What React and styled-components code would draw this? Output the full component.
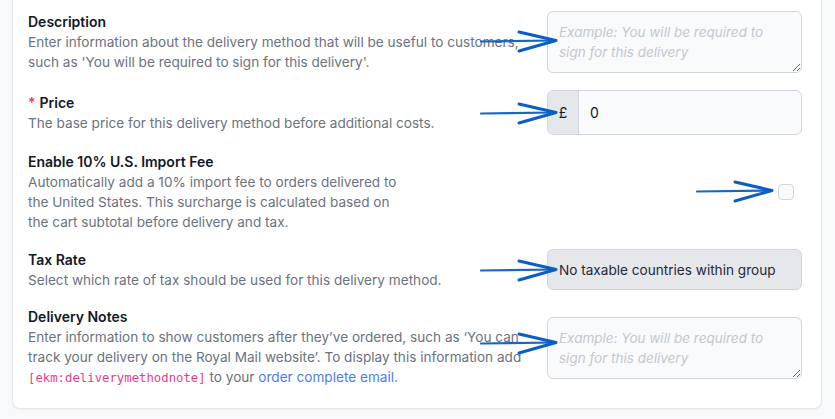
import React from 'react';
import styled, { createGlobalStyle } from 'styled-components';

const GlobalStyle = createGlobalStyle`
  body {
    margin: 0;
    background: #f8f9fb;
    font-family: Inter, "Noto Sans", sans-serif;
  }
`;

const Page = styled.div`
  padding: 0 13px 10px 12px;
`;

const Card = styled.div`
  background: #fff;
  border: 1px solid #e5e7eb;
  border-top: 0;
  border-radius: 0 0 8px 8px;
  box-shadow: 0 1px 2px rgba(0, 0, 0, 0.05);
  padding: 11px 19px 20px 15px;
  display: flex;
  flex-direction: column;
  gap: 17px;
`;

const Row = styled.div`
  display: grid;
  grid-template-columns: 1fr 255px;
  column-gap: 24px;
  align-items: center;
`;

const Info = styled.div`
  font-size: 13.6px;
  line-height: 20px;
  max-width: ${({ narrow }) => (narrow ? '380px' : 'none')};
`;

const Title = styled.div`
  font-size: 14px;
  font-weight: 600;
  color: #111827;
`;

const Required = styled.span`
  color: #ef4444;
  margin-right: 4px;
`;

const Help = styled.div`
  color: #6b7280;
`;

const Code = styled.code`
  font-family: "DejaVu Sans Mono", "Liberation Mono", monospace;
  font-size: 12.3px;
  color: #e83e8c;
`;

const Link = styled.a`
  color: #4a7cf6;
  text-decoration: none;
`;

const Control = styled.div`
  position: relative;
  display: flex;
  justify-content: ${({ end }) => (end ? 'flex-end' : 'stretch')};
  padding-right: ${({ end }) => (end ? '8px' : '0')};
`;

const TextArea = styled.textarea`
  width: 100%;
  height: 62px;
  box-sizing: border-box;
  border: 1px solid #d1d5db;
  border-radius: 6px;
  background: #f9fafb;
  padding: 10px 11px;
  font-family: Inter, sans-serif;
  font-size: 13.5px;
  line-height: 20px;
  color: #111827;
  outline: none;
  resize: vertical;
  &::placeholder {
    color: #c4c7ce;
    font-style: italic;
  }
`;

const InputGroup = styled.div`
  display: flex;
  width: 100%;
  height: 45px;
  box-sizing: border-box;
  border: 1px solid #d1d5db;
  border-radius: 6px;
  overflow: hidden;
  background: #f9fafb;
`;

const Prefix = styled.span`
  flex: 0 0 30px;
  display: flex;
  align-items: center;
  justify-content: center;
  background: #e5e7eb;
  border-right: 1px solid #d1d5db;
  font-size: 14px;
  color: #111827;
`;

const Input = styled.input`
  flex: 1;
  min-width: 0;
  border: 0;
  background: transparent;
  padding: 0 11px;
  font-family: Inter, sans-serif;
  font-size: 14px;
  color: #111827;
  outline: none;
`;

const Checkbox = styled.span`
  width: 16px;
  height: 16px;
  box-sizing: border-box;
  border: 1px solid #d1d5db;
  border-radius: 4px;
  background: #f9fafb;
`;

const Select = styled.div`
  width: 100%;
  height: 41px;
  box-sizing: border-box;
  display: flex;
  align-items: center;
  padding: 0 11px;
  border: 1px solid #d1d5db;
  border-radius: 6px;
  background: #e5e7eb;
  font-size: 13.6px;
  color: #1f2937;
`;

const ArrowSvg = styled.svg`
  position: absolute;
  left: ${({ left }) => left}px;
  top: ${({ top }) => top}px;
  pointer-events: none;
`;

function Arrow({ left = -67, top = 20 }) {
  return (
    <ArrowSvg left={left} top={top} width="78" height="24" viewBox="0 0 78 24">
      <path d="M1 11.5 L 76 10.5" stroke="#0b5fc4" strokeWidth="2.2" strokeLinecap="round" fill="none" opacity="0.95" />
      <path d="M39 2 L 76 10.5 L 39 21" stroke="#0b5fc4" strokeWidth="3" strokeLinecap="round" strokeLinejoin="round" fill="none" />
    </ArrowSvg>
  );
}

export default function App() {
  return (
    <Page>
      <GlobalStyle />
      <Card>
        <Row>
          <Info>
            <Title>Description</Title>
            <Help>
              Enter information about the delivery method that will be useful to customers,
              such as 'You will be required to sign for this delivery'.
            </Help>
          </Info>
          <Control>
            <Arrow top={19} />
            <TextArea placeholder="Example: You will be required to sign for this delivery" />
          </Control>
        </Row>

        <Row>
          <Info>
            <Title>
              <Required>*</Required>Price
            </Title>
            <Help>The base price for this delivery method before additional costs.</Help>
          </Info>
          <Control>
            <Arrow top={12} />
            <InputGroup>
              <Prefix>£</Prefix>
              <Input defaultValue="0" />
            </InputGroup>
          </Control>
        </Row>

        <Row>
          <Info narrow>
            <Title>Enable 10% U.S. Import Fee</Title>
            <Help>
              Automatically add a 10% import fee to orders delivered to the United States. This
              surcharge is calculated based on the cart subtotal before delivery and tax.
            </Help>
          </Info>
          <Control end>
            <Checkbox />
            <Arrow left={149} top={-4} />
          </Control>
        </Row>

        <Row>
          <Info>
            <Title>Tax Rate</Title>
            <Help>Select which rate of tax should be used for this delivery method.</Help>
          </Info>
          <Control>
            <Arrow top={10} />
            <Select>No taxable countries within group</Select>
          </Control>
        </Row>

        <Row>
          <Info>
            <Title>Delivery Notes</Title>
            <Help>
              Enter information to show customers after they’ve ordered, such as ‘You can track
              your delivery on the Royal Mail website’. To display this information add{' '}
              <Code>[ekm:deliverymethodnote]</Code> to your <Link href="#">order complete email.</Link>
            </Help>
          </Info>
          <Control>
            <Arrow top={15} />
            <TextArea placeholder="Example: You will be required to sign for this delivery" />
          </Control>
        </Row>
      </Card>
    </Page>
  );
}
